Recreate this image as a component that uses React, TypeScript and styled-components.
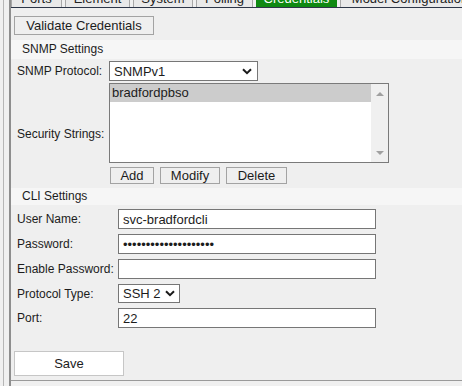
import * as React from 'react';
import styled, { createGlobalStyle } from 'styled-components';

const GlobalStyle = createGlobalStyle`
  html, body {
    margin: 0;
    padding: 0;
    background: #f0f0f0;
  }
  body {
    font-family: "Liberation Sans", Arial, sans-serif;
    color: #1c1c1c;
  }
  * { box-sizing: border-box; }
`;

const Page = styled.div`
  display: flex;
  width: 462px;
  height: 386px;
  overflow: hidden;
  background: #f0f0f0;
`;

const Rail = styled.div`
  flex: none;
  width: 4px;
  margin-right: 5px;
  border-right: 1px solid #b6b6b6;
`;

const Main = styled.div`
  flex: 1;
  display: flex;
  flex-direction: column;
  border-left: 2px solid #8e8e8e;
  min-width: 0;
`;

// only the bottom edge of the tab strip is in view
const TabBar = styled.div`
  height: 7px;
  overflow: hidden;
  display: flex;
  align-items: flex-end;
  gap: 3px;
`;

const Tab = styled.div<{ $w: number; $active?: boolean }>`
  flex: none;
  width: ${({ $w }) => $w}px;
  height: 20px;
  padding-top: 3px;
  border: 1px solid ${({ $active }) => ($active ? '#0f8a12' : '#a8a8a8')};
  border-bottom: none;
  background: ${({ $active }) => ($active ? '#0f8a12' : '#e9e9e9')};
  color: ${({ $active }) => ($active ? '#fff' : '#222')};
  font-size: 13px;
  line-height: 16px;
  text-align: center;
  white-space: nowrap;
  overflow: hidden;
`;

const Panel = styled.div`
  display: flex;
  flex-direction: column;
  align-items: flex-start;
  background: #efefef;
  border-top: 1px solid #2d3648;
  border-bottom: 1px solid #9a9a9a;
  padding: 8px 0 4px;
`;

const Button = styled.button<{ $w: number; $h?: number; $white?: boolean }>`
  display: block;
  width: ${({ $w }) => $w}px;
  height: ${({ $h }) => $h ?? 17}px;
  padding: 0;
  margin: 0;
  border: 1px solid ${({ $white }) => ($white ? '#c6c6c6' : '#a3a3a3')};
  border-radius: 0;
  background: ${({ $white }) => ($white ? '#fff' : '#efefef')};
  font-family: "Liberation Sans", Arial, sans-serif;
  font-size: 13px;
  color: #1c1c1c;
  line-height: 1;
  flex: none;
`;

const TopButton = styled(Button)`
  margin-left: 3px;
`;

const SaveButton = styled(Button)`
  margin-left: 3px;
  margin-top: 23px;
`;

const SectionHeader = styled.div<{ $h: number; $mt: number }>`
  align-self: stretch;
  height: ${({ $h }) => $h}px;
  line-height: ${({ $h }) => $h}px;
  margin-top: ${({ $mt }) => $mt}px;
  padding-left: 11px;
  background: #f6f6f6;
  font-size: 12px;
`;

const SnmpGrid = styled.div`
  display: grid;
  grid-template-columns: 92px auto;
  padding-left: 6px;
  margin-top: 2px;
`;

const CliGrid = styled.div`
  display: grid;
  grid-template-columns: 101px auto;
  row-gap: 5px;
  padding-left: 6px;
  margin-top: 4px;
`;

const Label = styled.div<{ $span?: number }>`
  font-size: 12px;
  line-height: 14px;
  align-self: center;
  white-space: nowrap;
  ${({ $span }) => ($span ? `grid-row: span ${$span}; padding-top: 2px;` : '')}
`;

const SelectBox = styled.div<{ $w: number; $pr: number }>`
  width: ${({ $w }) => $w}px;
  height: ${({ $w }) => ($w > 100 ? 20 : 19)}px;
  display: flex;
  align-items: center;
  justify-content: space-between;
  padding: 0 ${({ $pr }) => $pr}px 0 4px;
  border: 1px solid #767676;
  background: #fff;
  font-size: 13px;
`;

const TextInput = styled.input`
  display: block;
  width: 258px;
  height: 20px;
  margin: 0;
  padding: 0 4px;
  border: 1px solid #767676;
  border-radius: 0;
  background: #fff;
  font-family: "Liberation Sans", Arial, sans-serif;
  font-size: 13px;
  color: #1c1c1c;
  outline: none;
`;

const ListBox = styled.div`
  width: 280px;
  height: 80px;
  margin-top: 2px;
  display: flex;
  border: 1px solid #7a7a7a;
  background: #fff;
`;

const ListItems = styled.div`
  flex: 1;
`;

const ListItem = styled.div<{ $selected?: boolean }>`
  height: 18px;
  line-height: 18px;
  padding-left: 2px;
  font-size: 13px;
  background: ${({ $selected }) => ($selected ? '#cccccc' : 'transparent')};
`;

const ScrollTrack = styled.div`
  flex: none;
  width: 17px;
  display: flex;
  flex-direction: column;
  align-items: center;
  justify-content: space-between;
  padding: 8px 0 7px;
  background: #f0f0f0;
`;

const ButtonRow = styled.div`
  display: flex;
  gap: 6px;
  margin-top: 4px;
  padding-left: 1px;
`;

const Chevron = () => (
  <svg width="10" height="7" viewBox="0 0 10 7">
    <path d="M1 1.2 L5 5.2 L9 1.2" fill="none" stroke="#1a1a1a" strokeWidth="2" />
  </svg>
);

const Arrow = ({ up }: { up?: boolean }) => (
  <svg width="8" height="4" viewBox="0 0 8 4">
    <path d={up ? 'M0 4 L4 0 L8 4 Z' : 'M0 0 L8 0 L4 4 Z'} fill="#a0a0a0" />
  </svg>
);

const tabs = [
  { name: 'Ports', w: 51 },
  { name: 'Element', w: 65 },
  { name: 'System', w: 60 },
  { name: 'Polling', w: 57 },
  { name: 'Credentials', w: 81, active: true },
  { name: 'Model Configuration', w: 140 },
];

export default function App() {
  return (
    <>
      <GlobalStyle />
      <Page>
        <Rail />
        <Main>
          <TabBar>
            {tabs.map(t => (
              <Tab key={t.name} $w={t.w} $active={t.active}>
                {t.name}
              </Tab>
            ))}
          </TabBar>
          <Panel>
            <TopButton $w={140} $h={19}>Validate Credentials</TopButton>

            <SectionHeader $h={19} $mt={5}>SNMP Settings</SectionHeader>
            <SnmpGrid>
              <Label>SNMP Protocol:</Label>
              <SelectBox $w={149} $pr={5}>
                <span>SNMPv1</span>
                <Chevron />
              </SelectBox>
              <Label $span={2}>Security Strings:</Label>
              <ListBox>
                <ListItems>
                  <ListItem $selected>bradfordpbso</ListItem>
                </ListItems>
                <ScrollTrack>
                  <Arrow up />
                  <Arrow />
                </ScrollTrack>
              </ListBox>
              <ButtonRow>
                <Button $w={44}>Add</Button>
                <Button $w={60}>Modify</Button>
                <Button $w={61}>Delete</Button>
              </ButtonRow>
            </SnmpGrid>

            <SectionHeader $h={17} $mt={4}>CLI Settings</SectionHeader>
            <CliGrid>
              <Label>User Name:</Label>
              <TextInput readOnly value="svc-bradfordcli" />
              <Label>Password:</Label>
              <TextInput readOnly value={'\u2022'.repeat(20)} />
              <Label>Enable Password:</Label>
              <TextInput readOnly value="" />
              <Label>Protocol Type:</Label>
              <SelectBox $w={62} $pr={4}>
                <span>SSH 2</span>
                <Chevron />
              </SelectBox>
              <Label>Port:</Label>
              <TextInput readOnly value="22" />
            </CliGrid>

            <SaveButton $w={110} $h={25} $white>Save</SaveButton>
          </Panel>
        </Main>
      </Page>
    </>
  );
}
